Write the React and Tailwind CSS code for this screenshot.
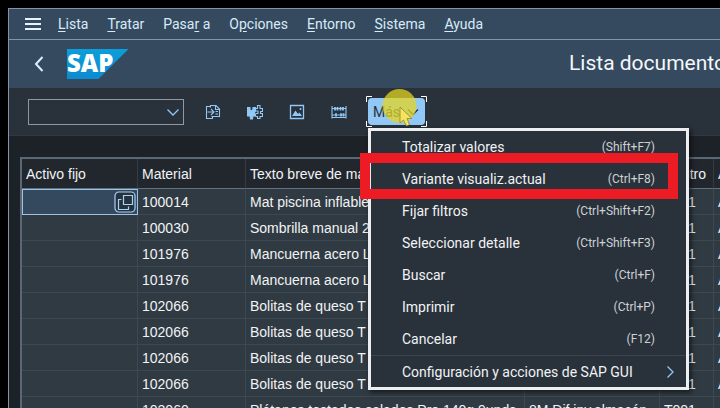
const MENUS = [
  ["", "L", "ista"],
  ["", "T", "ratar"],
  ["Pasa", "r", " a"],
  ["O", "p", "ciones"],
  ["", "E", "ntorno"],
  ["", "S", "istema"],
  ["", "A", "yuda"],
];

const ACTIONS = [
  ["Totalizar valores", "(Shift+F7)"],
  ["Variante visualiz.actual", "(Ctrl+F8)"],
  ["Fijar filtros", "(Ctrl+Shift+F2)"],
  ["Seleccionar detalle", "(Ctrl+Shift+F3)"],
  ["Buscar", "(Ctrl+F)"],
  ["Imprimir", "(Ctrl+P)"],
  ["Cancelar", "(F12)"],
];

const ROWS = [
  ["100014", "Mat piscina inflable"],
  ["100030", "Sombrilla manual 2"],
  ["101976", "Mancuerna acero L"],
  ["101976", "Mancuerna acero L"],
  ["102066", "Bolitas de queso T"],
  ["102066", "Bolitas de queso T"],
  ["102066", "Bolitas de queso T"],
  ["102066", "Bolitas de queso T"],
  ["102060", "Plátanos tostados salados Pro 140g 9unds"],
];

const CELL = "overflow-hidden whitespace-nowrap border-r border-b border-[#3d4851] px-1 text-left font-normal";
const HEAD = "overflow-hidden whitespace-nowrap border-r border-b border-r-[#343d46] border-b-[#607080] px-1 text-left font-normal";

function Chevron({ className, d }) {
  return (
    <svg className={className} viewBox="0 0 12 12" fill="none" stroke="currentColor" strokeWidth="1.3" aria-hidden="true">
      <path d={d} />
    </svg>
  );
}

function ToolButton({ label, children }) {
  return (
    <button type="button" aria-label={label} className="size-4 shrink-0 text-[#91c8f6]">
      <svg viewBox="0 0 16 16" className="size-4" fill="none" stroke="currentColor" strokeWidth="1.1">
        {children}
      </svg>
    </button>
  );
}

function Logo() {
  return (
    <svg viewBox="0 0 62 30" className="h-[30px] w-[62px]" role="img" aria-label="SAP">
      <defs>
        <linearGradient id="sap" x1="0" y1="0" x2="0" y2="1">
          <stop offset="0" stopColor="#0c9edb" />
          <stop offset="1" stopColor="#0d8bd0" />
        </linearGradient>
      </defs>
      <path d="M0 0H61.500L31.500 30H0Z" fill="url(#sap)" />
      <text x="0" y="23" fill="#fff" fontFamily="Open Sans, sans-serif" fontWeight="800" fontSize="24">SAP</text>
    </svg>
  );
}

function MoreMenu() {
  return (
    <div role="menu" className="absolute top-[30px] left-0 z-10 w-[321px] border-[3px] border-[#eceef0] bg-[#29313a] text-sm text-[#f0f3f5] shadow-[2px_2px_5px_rgba(0,0,0,0.6)]">
      {ACTIONS.map(([name, keys]) => (
        <button key={name} type="button" role="menuitem" className="flex h-8 w-full items-center justify-between px-[31px]">
          <span>{name}</span>
          <span className="text-xs text-[#cdd2d6]">{keys}</span>
        </button>
      ))}
      <button type="button" role="menuitem" className="flex h-8 w-full items-center justify-between border-t border-[#3b454f] pr-2.5 pl-[31px]">
        <span>Configuración y acciones de SAP GUI</span>
        <Chevron className="size-3 text-[#91c8f6]" d="M3.500 0.500L9 6L3.500 11.500" />
      </button>
      <div className="pointer-events-none absolute top-[22px] -left-[11px] h-[46px] w-[318px] border-10 border-[#ed1c24]" />
    </div>
  );
}

function MoreButton() {
  return (
    <div className="relative ml-[21px] h-[27px] w-[57px] shrink-0">
      <button type="button" className="flex size-full items-center justify-between rounded bg-[#91c8f6] pr-1.5 pl-[5px] text-sm text-[#29313a]">
        Más
        <Chevron className="size-3" d="M1 3.500L6 8.500L11 3.500" />
      </button>
      <svg viewBox="0 0 61 31" className="pointer-events-none absolute -top-0.5 -left-0.5 h-[31px] w-[61px]" fill="none" stroke="#fff">
        <path d="M.5 6V.5H6M55 .5H60.500V6M60.500 25V30.500H55M6 30.500H.5V25" />
      </svg>
      <MoreMenu />
      <svg viewBox="0 0 36 40" className="pointer-events-none absolute -top-[9px] left-[14px] z-20 h-10 w-9">
        <circle cx="17.500" cy="17" r="17" fill="#e6d51e" fillOpacity="0.74" />
        <path d="M18 18V34L21.500 31L24.500 37L27.500 35.500L25 29.500H30Z" fill="#f3e35d" stroke="#8d8435" strokeWidth="0.8" />
      </svg>
    </div>
  );
}

export default function App() {
  return (
    <div className="h-screen overflow-hidden bg-black pt-2 pl-2 font-[Roboto,'Noto_Sans',sans-serif]">
      <div className="flex h-full flex-col border-t border-l border-[#8493a5] bg-[#1d2228]">
        <nav className="flex h-[31px] shrink-0 items-center border-b border-[#8394a6] bg-[#354a5f] pl-4 text-sm text-[#d8ebfa]">
          <button type="button" aria-label="Menú" className="flex w-4 flex-col gap-[3px]">
            <span className="h-0.5 bg-[#e4f3ff]" />
            <span className="h-0.5 bg-[#e4f3ff]" />
            <span className="h-0.5 bg-[#e4f3ff]" />
          </button>
          <div className="ml-[17px] flex gap-[19px]">
            {MENUS.map(([a, key, b]) => (
              <button key={a + key + b} type="button" className="whitespace-pre">
                {a}<u className="underline-offset-2">{key}</u>{b}
              </button>
            ))}
          </div>
        </nav>

        <header className="flex h-12 shrink-0 items-center bg-[#354a5f] pl-6">
          <button type="button" aria-label="Atrás" className="text-[#dceeff]">
            <svg viewBox="0 0 12 16" className="h-4 w-3" fill="none" stroke="currentColor" strokeWidth="2">
              <path d="M9.500 1L3 8L9.500 15" />
            </svg>
          </button>
          <div className="ml-[22px]"><Logo /></div>
          <h1 className="ml-auto w-[151px] shrink-0 whitespace-nowrap text-[21px] text-[#f4f8fb]">Lista documento</h1>
        </header>

        <div className="flex h-12 shrink-0 items-center border-b border-[#34383d] bg-[#29313a] pl-[19px]">
          <div className="relative text-[#91c8f6]">
            <select aria-label="Comando" className="block h-[26px] w-[156px] appearance-none border border-[#8d98a3] bg-[#29313a]" />
            <Chevron className="pointer-events-none absolute top-[7px] right-[5px] size-3" d="M.5 3.500L6 9L11.500 3.500" />
          </div>
          <div className="ml-[21px] flex gap-[26px]">
            <ToolButton label="Tomar selección">
              <path d="M5.500 3.500V1.500H11L14.500 5V12.500H6.500M10.500 1.500V5.500H14.500M5 2.500H1.500V14.500H7.500V12.500M2.500 8H8.500M6 5L9 8L6 11M10.500 7.500H13M10.500 10H13" />
            </ToolButton>
            <ToolButton label="Servicios">
              <path d="M.5 3.500H3V6L4.500 7L6 5.500V3.500H8.500V7L7.500 8.500L8.500 10.500V12H6L5.500 15H3.500L3 12H.5Z" fill="currentColor" />
              <path d="M9 4.500H10.500V1.500H13V4.500H15.500V7.500H13.500V9.500H15.500V12.500H13V14.500H10.500V12.500H8.500M8.500 7H11V9.500H9" />
            </ToolButton>
            <ToolButton label="Gráfico">
              <path d="M1.500 1.500H14.500V14.500H1.500Z" strokeWidth="1.300" />
              <path d="M3 12L6.500 6.500L9 10L10.500 8.500L13 12Z" fill="currentColor" stroke="none" />
              <circle cx="11.500" cy="5" r="1" fill="currentColor" stroke="none" />
            </ToolButton>
            <ToolButton label="Calcular">
              <path d="M1 2V14.500M15 2V14.500M1 4.500H15M1 11H15M1 13.500H15" />
              <path d="M4 3V6.500M6.500 3V6.500M9.500 3V6.500M12 3V6.500M5 9.200V12.500M10 9.200V12.500M12.500 9.200V12.500" strokeWidth="1.800" />
            </ToolButton>
          </div>
          <MoreButton />
        </div>

        <main className="mt-[21px] ml-[11px] min-h-0 flex-1 overflow-hidden border-t-2 border-l-2 border-[#5a6875] bg-[#303a43] font-['Liberation_Sans',Arial,sans-serif] text-sm text-[#f1f3f4]">
          <table className="w-[803px] table-fixed border-separate border-spacing-0">
            <colgroup>
              <col className="w-[116px]" />
              <col className="w-[108px]" />
              <col className="w-[279px]" />
              <col className="w-[135px]" />
              <col className="w-[54px]" />
              <col />
            </colgroup>
            <thead>
              <tr className="h-[30px] bg-[#22272e]">
                <th className={HEAD}>Activo fijo</th>
                <th className={HEAD}>Material</th>
                <th className={HEAD}>Texto breve de material</th>
                <th className={HEAD}>Denominación</th>
                <th className={HEAD}>Centro</th>
                <th className={HEAD}>Almacén</th>
              </tr>
            </thead>
            <tbody>
              {ROWS.map(([material, text], i) => (
                <tr key={i} className="h-[26px]">
                  {i === 0 ? (
                    <td className="border border-[#9cc4e4] bg-[#34495e] p-0 pr-px">
                      <button type="button" aria-label="Ayuda de búsqueda" className="ml-auto block text-[#a9d2f4]">
                        <svg viewBox="0 0 22 22" className="size-[22px]" fill="none" stroke="currentColor" strokeWidth="1.2">
                          <rect x="1" y="1" width="20" height="20" rx="4" fill="#26323e" />
                          <path d="M9.500 4.500H18.500V13.500H9.500ZM7.500 8.500H4.500V18.500H14.500V15.500" />
                        </svg>
                      </button>
                    </td>
                  ) : (
                    <td className={CELL} />
                  )}
                  <td className={CELL}>{material}</td>
                  <td className={CELL}>{text}</td>
                  <td className={CELL}>8M Dif.inv.almacén</td>
                  <td className={CELL}>T001</td>
                  <td className={CELL}>A001</td>
                </tr>
              ))}
            </tbody>
          </table>
        </main>
      </div>
    </div>
  );
}
